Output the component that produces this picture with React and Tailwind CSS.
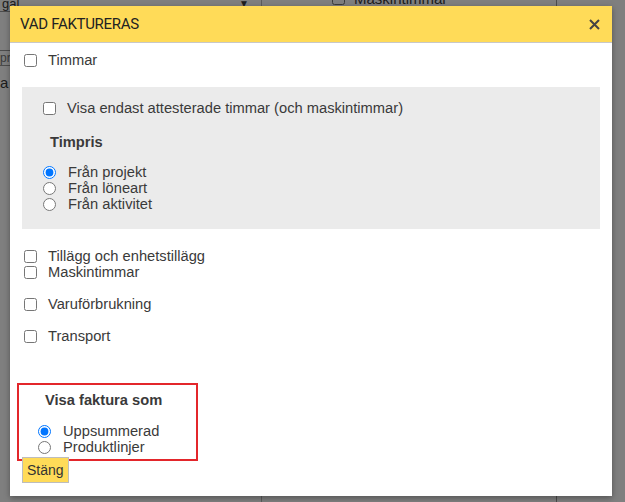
import React from 'react'

function Check({ label, className = '' }) {
  return (
    <label className={`flex items-center h-4 ${className}`}>
      <input type="checkbox" className="m-0 w-[13px] h-[13px]" />
      <span className="ml-[11px]">{label}</span>
    </label>
  )
}

function Radio({ label, name, checked }) {
  return (
    <label className="flex items-center h-4">
      <input type="radio" name={name} defaultChecked={checked} className="m-0 w-[13px] h-[13px]" />
      <span className="ml-[12px]">{label}</span>
    </label>
  )
}

export default function App() {
  return (
    <div className="relative w-[625px] h-[502px] overflow-hidden bg-white text-[14.7px] text-[#3a3a3a]" style={{ fontFamily: '"Liberation Sans", Arial, sans-serif' }}>
      {/* page behind the dialog */}
      <div className="flex h-full">
        <div className="w-[262px] border-r border-[#bbb] flex flex-col">
          <div className="h-[12px] border-b border-[#999] text-[13px] leading-[8px] pl-[2px] flex justify-between pr-[12px]">
            <span>gal</span><span className="text-[10px]">▼</span>
          </div>
          <div className="h-[38px]" />
          <div className="h-[16px] border-y border-[#999] text-[12px] text-[#777] leading-[14px]">proj</div>
          <div className="mt-[6px] text-[15px]">a a</div>
        </div>
        <div className="w-[295px] border-r border-[#999] pl-[70px] flex items-start -mt-[8px]">
          <input type="checkbox" className="m-0 w-[13px] h-[13px]" />
          <span className="ml-[9px] text-[15px] leading-[14px]">Maskintimmar</span>
        </div>
      </div>
      <div className="absolute inset-0 bg-black/50" />

      {/* dialog */}
      <div className="absolute left-[10px] top-[6px] w-[602px] h-[490px] bg-white shadow-[0_2px_6px_rgba(0,0,0,0.35)] flex flex-col">
        <div className="h-[37px] bg-[#ffdb58] border-b border-[#c8c8c8] flex items-center justify-between pl-[10px] pr-[12px]">
          <span className="text-[15px] text-[#222]" style={{ fontFamily: 'Roboto, "Liberation Sans", sans-serif', letterSpacing: '-0.3px' }}>VAD FAKTURERAS</span>
          <svg width="11" height="11" viewBox="0 0 11 11" className="text-[#444]">
            <path d="M1 1L10 10M10 1L1 10" stroke="currentColor" strokeWidth="2" />
          </svg>
        </div>

        <div className="pl-[14px] pt-[9px]">
          <Check label="Timmar" />
        </div>

        <div className="mx-[12px] mt-[19px] h-[142px] bg-[#ebebeb] pl-[21px] pt-[13px]">
          <Check label="Visa endast attesterade timmar (och maskintimmar)" />
          <div className="font-bold mt-[18px] ml-[7px] h-4 leading-4">Timpris</div>
          <div className="mt-[14px]">
            <Radio name="timpris" label="Från projekt" checked />
            <Radio name="timpris" label="Från löneart" />
            <Radio name="timpris" label="Från aktivitet" />
          </div>
        </div>

        <div className="pl-[14px] mt-[19px]">
          <Check label="Tillägg och enhetstillägg" />
          <Check label="Maskintimmar" />
          <Check label="Varuförbrukning" className="mt-[16px]" />
          <Check label="Transport" className="mt-[16px]" />
        </div>

        <div className="ml-[7px] mt-[39px] w-[181px] h-[78px] border-2 border-[#e3262b] pt-[7px] pl-[20px]">
          <div className="font-bold h-4 leading-4 ml-[6px]">Visa faktura som</div>
          <div className="mt-[15px] -ml-[1px]">
            <Radio name="visa" label="Uppsummerad" checked />
            <Radio name="visa" label="Produktlinjer" />
          </div>
        </div>

        <div className="relative pl-[12px] -mt-[4px]">
          <button className="h-[26px] px-[4px] bg-[#ffdb58] border border-[#bdbdbd] text-[14px] text-[#333] leading-none">Stäng</button>
        </div>
      </div>
    </div>
  )
}
